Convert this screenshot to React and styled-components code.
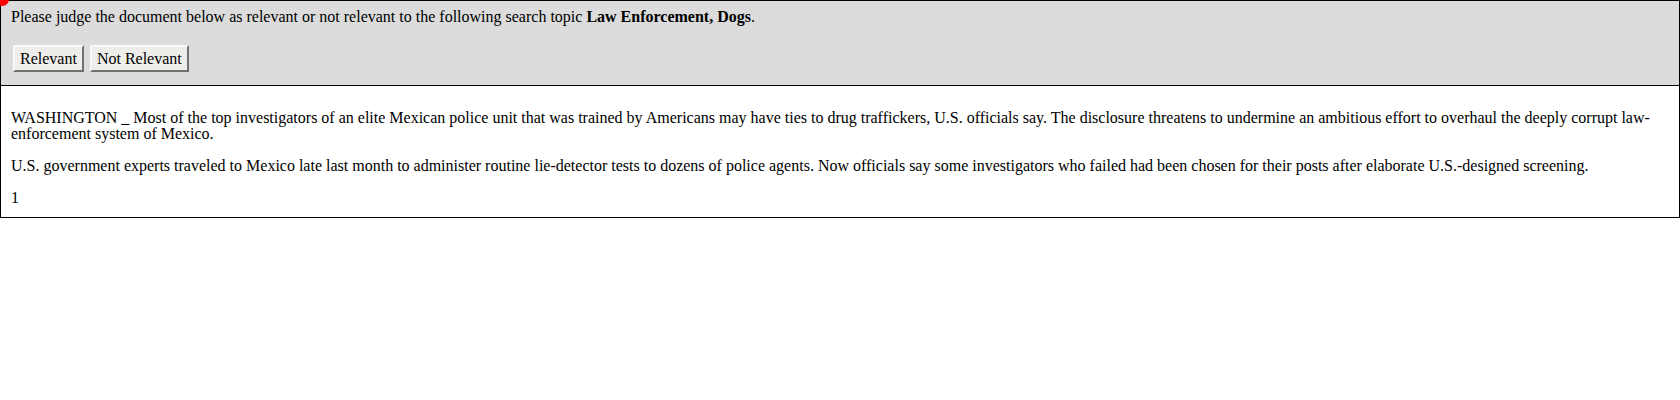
import styled, { createGlobalStyle } from "styled-components";

const GlobalStyle = createGlobalStyle`
  body {
    margin: 0;
    background: #fff;
    color: #000;
    font-family: "Liberation Serif", "Times New Roman", serif;
    font-size: 16px;
  }
`;

const paragraphs = [
  "WASHINGTON _ Most of the top investigators of an elite Mexican police unit that was trained by Americans may have ties to drug traffickers, U.S. officials say. The disclosure threatens to undermine an ambitious effort to overhaul the deeply corrupt law-enforcement system of Mexico.",
  "U.S. government experts traveled to Mexico late last month to administer routine lie-detector tests to dozens of police agents. Now officials say some investigators who failed had been chosen for their posts after elaborate U.S.-designed screening.",
];

export default function App() {
  return (
    <Page>
      <GlobalStyle />
      <Marker />
      <JudgePanel>
        <Prompt>
          Please judge the document below as relevant or not relevant to the
          following search topic <strong>Law Enforcement, Dogs</strong>.
        </Prompt>
        <ButtonRow>
          <JudgeButton type="button">Relevant</JudgeButton>
          <JudgeButton type="button">Not Relevant</JudgeButton>
        </ButtonRow>
      </JudgePanel>
      <DocumentBox>
        {paragraphs.map((text) => (
          <Paragraph key={text.slice(0, 20)}>{text}</Paragraph>
        ))}
        <PageNumber>1</PageNumber>
      </DocumentBox>
    </Page>
  );
}

const Page = styled.div`
  position: relative;
  line-height: 16px;
`;

const Marker = styled.span`
  position: absolute;
  top: -7px;
  left: -4px;
  width: 13px;
  height: 13px;
  border-radius: 50%;
  background: #f00;
  z-index: 2;
`;

const JudgePanel = styled.div`
  background: #dcdcdc;
  border: 1px solid #000;
  padding: 8px 10px 13px;
`;

const Prompt = styled.div`
  margin: 0;
`;

const ButtonRow = styled.div`
  display: flex;
  gap: 6px;
  margin-top: 20px;
  padding-left: 2px;
`;

const JudgeButton = styled.button`
  background: #efede9;
  border: 2px solid;
  border-color: #f8f8f8 #707070 #707070 #f8f8f8;
  color: #000;
  font-family: inherit;
  font-size: 16px;
  height: 27px;
  line-height: 16px;
  padding: 0 5px;
`;

const DocumentBox = styled.div`
  border: 1px solid #000;
  border-top: none;
  padding: 8px 10px 11px;
`;

const Paragraph = styled.p`
  margin: 16px 0;
`;

const PageNumber = styled.div`
  margin-top: 16px;
`;
